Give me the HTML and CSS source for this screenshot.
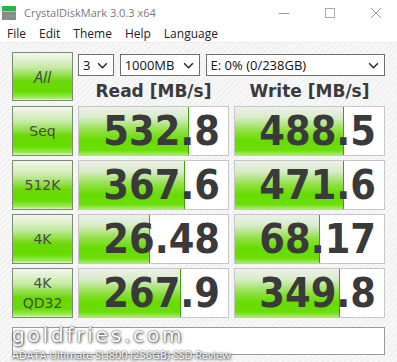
FILE: index.html
```html
<!DOCTYPE html>
<html>
<head>
<meta charset="UTF-8">
<title>CrystalDiskMark 3.0.3 x64</title>
<link rel="stylesheet" href="styles.css">
</head>
<body>
<div class="window">
  <div class="titlebar">
    <svg class="appicon" width="14" height="14" viewBox="0 0 14 14">
      <rect x="0" y="0" width="14" height="5" fill="#2fb24a"/>
      <rect x="0" y="5" width="14" height="9" fill="#8a8a8a"/>
      <rect x="0" y="5" width="14" height="1" fill="#bbb"/>
      <rect x="10" y="9" width="2" height="2" fill="#3fe060"/>
    </svg>
    <span class="title">CrystalDiskMark 3.0.3 x64</span>
    <div class="controls">
      <svg width="12" height="12" viewBox="0 0 12 12"><line x1="1" y1="6.5" x2="11" y2="6.5" stroke="#999" stroke-width="1"/></svg>
      <svg width="12" height="12" viewBox="0 0 12 12"><rect x="1.5" y="1.5" width="9" height="9" fill="none" stroke="#aaa" stroke-width="1"/></svg>
      <svg width="12" height="12" viewBox="0 0 12 12"><path d="M1 1 L11 11 M11 1 L1 11" stroke="#999" stroke-width="1"/></svg>
    </div>
  </div>
  <div class="menubar">
    <span>File</span><span>Edit</span><span>Theme</span><span>Help</span><span>Language</span>
  </div>

  <div class="main">
    <div class="grid">
      <div class="btn all">All</div>
      <div class="top">
        <div class="selects">
          <div class="sel s1">3<svg viewBox="0 0 12 8"><path d="M1 1.5 L6 6.5 L11 1.5" fill="none" stroke="#222" stroke-width="1.6"/></svg></div>
          <div class="sel s2">1000MB<svg viewBox="0 0 12 8"><path d="M1 1.5 L6 6.5 L11 1.5" fill="none" stroke="#222" stroke-width="1.6"/></svg></div>
          <div class="sel s3">E: 0% (0/238GB)<svg viewBox="0 0 12 8"><path d="M1 1.5 L6 6.5 L11 1.5" fill="none" stroke="#222" stroke-width="1.6"/></svg></div>
        </div>
        <div class="heads">
          <span>Read [MB/s]</span>
          <span>Write [MB/s]</span>
        </div>
      </div>

      <div class="btn">Seq</div>
      <div class="val"><div class="bar" style="width:110px"></div><span>532.8</span></div>
      <div class="val"><div class="bar" style="width:109px"></div><span>488.5</span></div>

      <div class="btn">512K</div>
      <div class="val"><div class="bar" style="width:106px"></div><span>367.6</span></div>
      <div class="val"><div class="bar" style="width:109px"></div><span>471.6</span></div>

      <div class="btn">4K</div>
      <div class="val"><div class="bar" style="width:71px"></div><span>26.48</span></div>
      <div class="val"><div class="bar" style="width:85px"></div><span>68.17</span></div>

      <div class="btn two">4K<br>QD32</div>
      <div class="val"><div class="bar" style="width:102px"></div><span>267.9</span></div>
      <div class="val"><div class="bar" style="width:105px"></div><span>349.8</span></div>
    </div>

    <div class="comment">
      <div class="mark">
        <div class="site">goldfries.com</div>
        <div class="review">ADATA Ultimate SU800 (256GB) SSD Review</div>
      </div>
    </div>
  </div>
</div>
</body>
</html>
```

FILE: styles.css
```css
html, body{
  margin:0;
  padding:0;
}
body{
  width:397px;
  height:362px;
  overflow:hidden;
  font-family:"Open Sans", "Noto Sans", sans-serif;
  background:#fff;
}
.titlebar{
  height:25px;
  display:flex;
  align-items:center;
  background:#fff;
}
.appicon{
  margin:0 8px 0 2px;
}
.title{
  font-size:11px;
  color:#7a7a7a;
}
.controls{
  margin-left:auto;
  display:flex;
  gap:34px;
  padding-right:15px;
}
.menubar{
  height:16px;
  display:flex;
  align-items:center;
  gap:13px;
  padding-left:7px;
  font-size:12px;
  color:#222;
  border-bottom:1px solid #ececec;
  padding-bottom:1px;
}
.main{
  height:320px;
  padding:9px 0 0 12px;
  box-sizing:border-box;
  position:relative;
  background:repeating-linear-gradient(135deg, #f1f1f1 0 2px, #f8f8f8 2px 4px);
}
.grid{
  display:grid;
  grid-template-columns:61px 151px 151px;
  grid-template-rows:50px 50px 50px 50px 50px;
  column-gap:5px;
  row-gap:4px;
}
.btn{
  box-sizing:border-box;
  border:1px solid #7c8a72;
  background:linear-gradient(#f4f7f0 0%, #c8eaa8 30%, #6ad806 60%, #66dc00 82%, #a0ec60 96%, #e0f5d0 100%);
  display:flex;
  align-items:center;
  justify-content:center;
  text-align:center;
  font-family:"DejaVu Sans", sans-serif;
  font-size:14px;
  color:#4a4a4a;
  line-height:20px;
}
.btn.all{
  height:49px;
  font-size:16px;
  font-style:italic;
  font-family:"Open Sans", sans-serif;
}
.top{
  grid-column:2 / 4;
  display:flex;
  flex-direction:column;
}
.selects{
  display:flex;
  gap:6px;
  margin-top:2px;
}
.sel{
  box-sizing:border-box;
  height:22px;
  border:1px solid #6e6e6e;
  background:#fff;
  display:flex;
  align-items:center;
  padding:0 5px 0 4px;
  font-size:13px;
  color:#111;
}
.sel svg{
  width:11px;
  height:7px;
  margin-left:auto;
}
.s1{ width:36px; }
.s2{ width:81px; }
.s3{ width:182px; }
.heads{
  display:grid;
  grid-template-columns:151px 151px;
  column-gap:5px;
  margin-top:3px;
}
.heads span{
  text-align:center;
  font-family:"DejaVu Sans", sans-serif;
  font-weight:bold;
  font-size:17px;
  color:#3a3a3a;
  line-height:24px;
}
.val{
  box-sizing:border-box;
  border:1px solid #c6c6c6;
  background:#fff;
  display:grid;
}
.bar, .val span{
  grid-area:1 / 1;
}
.bar{
  box-sizing:border-box;
  border-right:1px solid #3f9f10;
  background:linear-gradient(#eef0ea 0%, #d8ecc8 22%, #8ee040 50%, #66dc00 70%, #6cde08 90%, #a8ec70 100%);
}
.val span{
  z-index:1;
  text-align:right;
  padding-right:8px;
  font-family:"DejaVu Sans Condensed", "DejaVu Sans", sans-serif;
  font-stretch:condensed;
  font-weight:bold;
  font-size:41px;
  line-height:48px;
  color:#3a3a3a;
}
.comment{
  box-sizing:border-box;
  width:373px;
  height:28px;
  margin-top:9px;
  border:1px solid #9a9a9a;
  background:#fff;
}
.mark{
  position:absolute;
  left:12px;
  bottom:1px;
  color:#fff;
  text-shadow:0 0 2px #333, 1px 1px 3px #555;
}
.site{
  font-family:"DejaVu Sans", sans-serif;
  font-size:20px;
  letter-spacing:2.8px;
  line-height:24px;
}
.review{
  font-family:"Open Sans", sans-serif;
  font-size:11px;
  line-height:15px;
  letter-spacing:-0.1px;
}
```
